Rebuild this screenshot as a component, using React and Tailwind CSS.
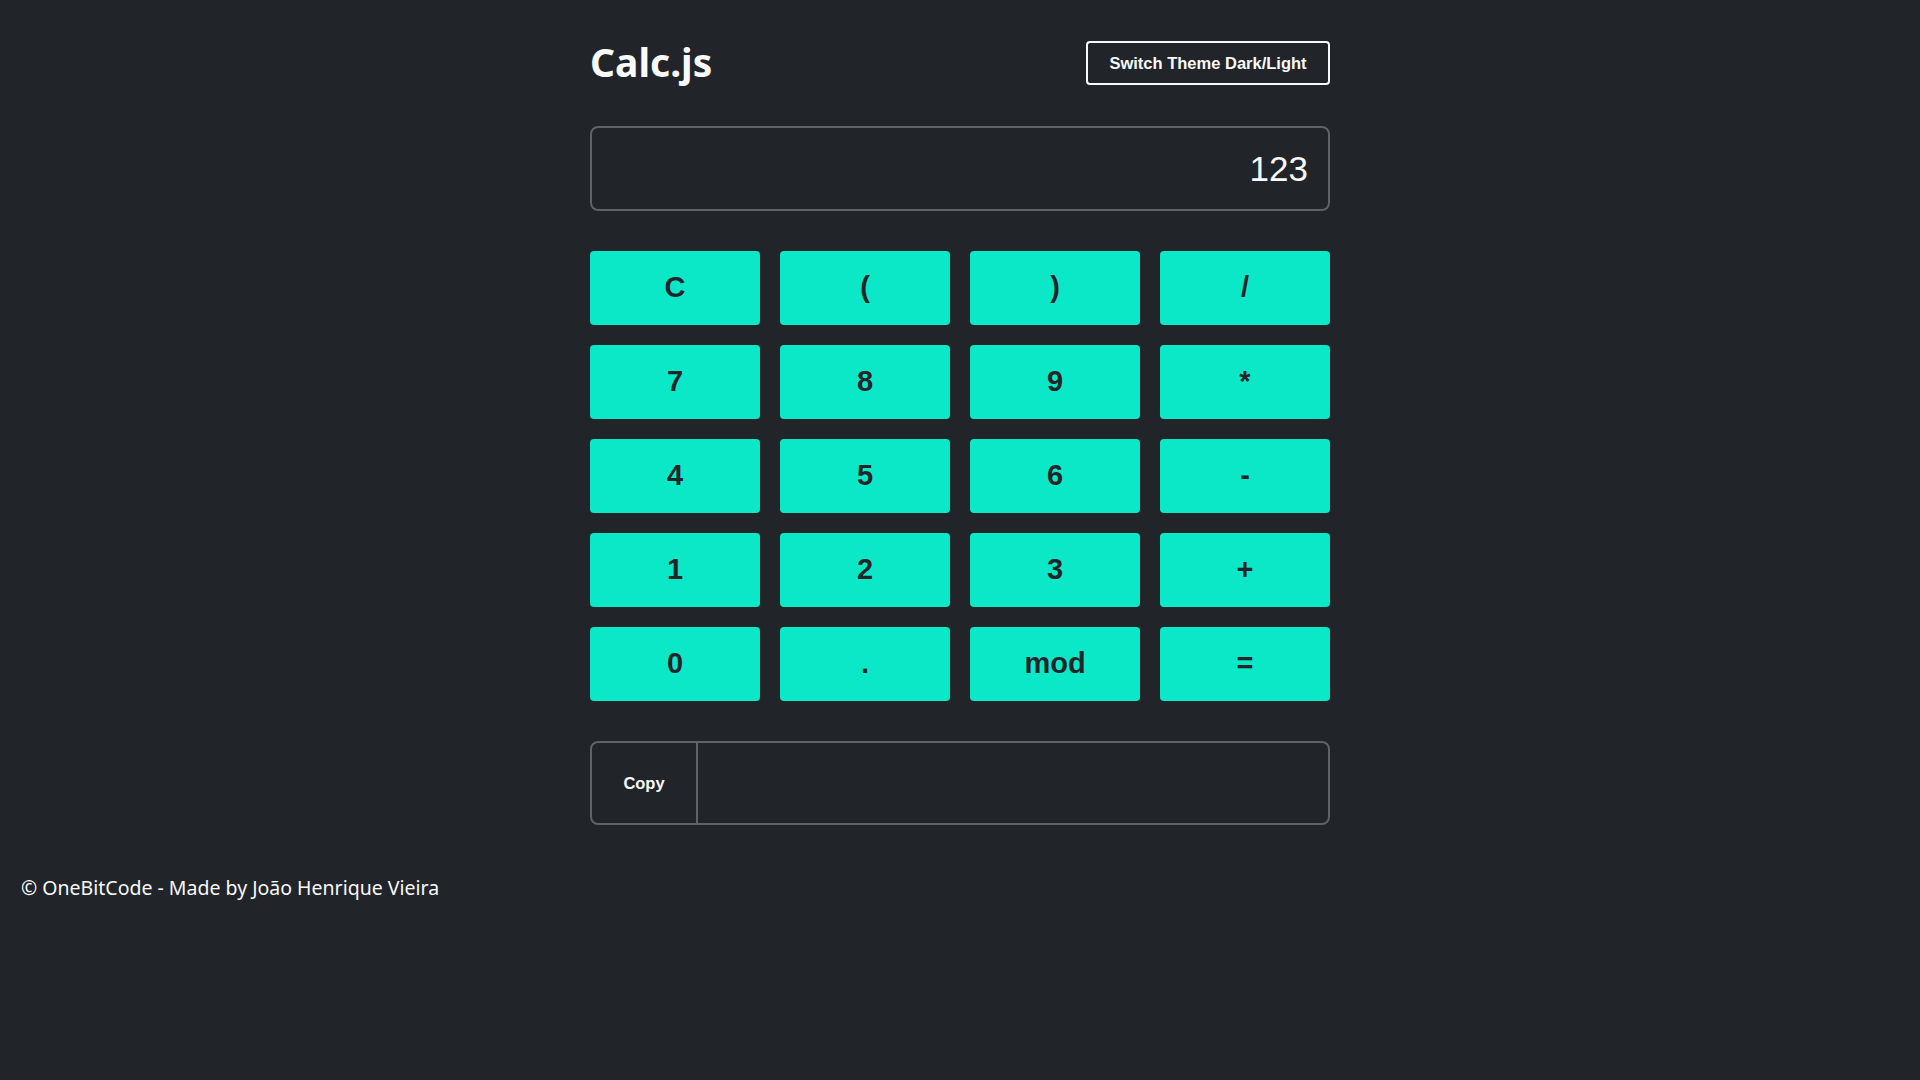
import React, { useState } from 'react';

// Keys in order, row by row
const KEYS = ['C', '(', ')', '/', '7', '8', '9', '*', '4', '5', '6', '-', '1', '2', '3', '+', '0', '.', 'mod', '='];

const App = () => {
  const [value, setValue] = useState('123');
  const [result, setResult] = useState('');

  const press = (k) => {
    if (k === 'C') return setValue('');
    if (k === '=') {
      setResult(value);
      return;
    }
    setValue(v => v + (k === 'mod' ? '%' : k));
  };

  return (
    <div className="min-h-screen bg-[#212529] text-[#f8f9fa]" style={{ fontFamily: "'Liberation Sans', Arial, sans-serif" }}>
      <main className="w-[740px] mx-auto pt-[41px]">
        {/* Header */}
        <div className="flex items-center justify-between h-[44px]">
          <h1 className="text-[39px] font-bold leading-none -mt-[3px]" style={{ fontFamily: "'Noto Sans', sans-serif" }}>
            Calc.js
          </h1>
          <button className="h-[44px] w-[244px] rounded-[4px] border-2 border-[#f8f9fa] text-[16.5px] font-bold text-[#f8f9fa]">
            Switch Theme Dark/Light
          </button>
        </div>

        {/* Display */}
        <input
          value={value}
          onChange={e => setValue(e.target.value)}
          className="mt-[41px] block w-full h-[85px] rounded-[8px] border-2 border-[#5f6267] bg-transparent px-[20px] text-right text-[35px] text-[#f8f9fa] outline-none"
        />

        {/* Keypad */}
        <div className="mt-[40px] grid grid-cols-4 gap-x-[20px] gap-y-[20px]">
          {KEYS.map(k => (
            <button
              key={k}
              onClick={() => press(k)}
              className="h-[74px] rounded-[4px] bg-[#0be8c7] text-[29px] font-bold text-[#212529]"
            >
              {k}
            </button>
          ))}
        </div>

        {/* Result / copy */}
        <div className="mt-[40px] flex h-[84px] rounded-[8px] border-2 border-[#5f6267] overflow-hidden">
          <button className="w-[106px] border-r-2 border-[#5f6267] text-[16.5px] font-bold text-[#f8f9fa]">
            Copy
          </button>
          <input
            readOnly
            value={result}
            className="flex-1 bg-transparent px-4 text-[20px] text-[#f8f9fa] outline-none"
          />
        </div>
      </main>

      <footer className="px-[21px] pt-[48px] text-[19.5px] text-[#f8f9fa]" style={{ fontFamily: "'Noto Sans', sans-serif" }}>
        © OneBitCode - Made by João Henrique Vieira
      </footer>
    </div>
  );
};

export default App;
